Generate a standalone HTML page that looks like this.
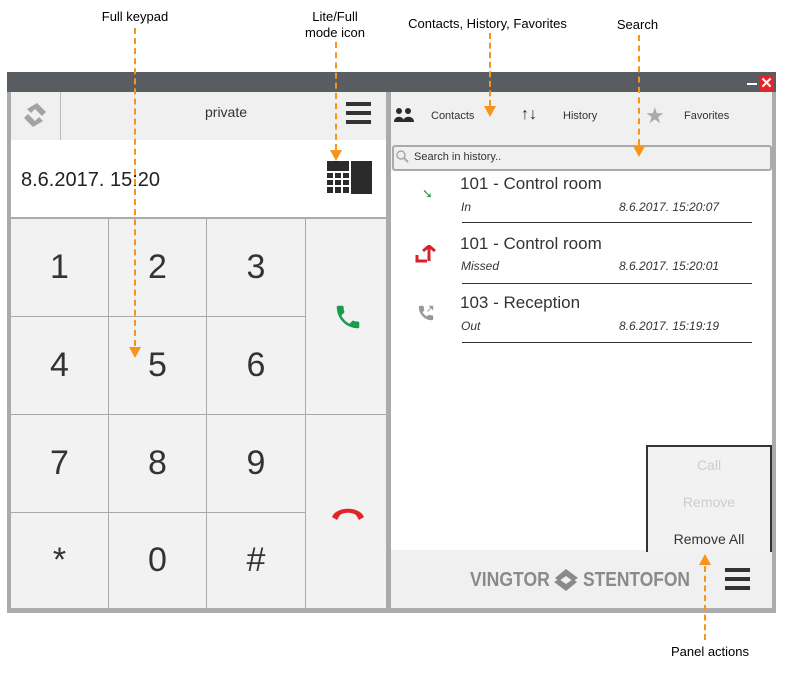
<!DOCTYPE html>
<html><head><meta charset="utf-8"><style>
body{margin:0;width:803px;height:680px;background:#fff;position:relative;font-family:"Liberation Sans",sans-serif;overflow:hidden}
.a{position:absolute}
.lbl{position:absolute;font-size:13px;color:#000;text-align:center}
.dash{position:absolute;width:0;border-left:2px dashed #f7941d}
.arr{position:absolute;width:0;height:0;border-left:6px solid transparent;border-right:6px solid transparent;border-top:11px solid #f7941d}
.arrup{position:absolute;width:0;height:0;border-left:6px solid transparent;border-right:6px solid transparent;border-bottom:11px solid #f7941d}
.k{position:absolute;background:#f2f2f2;border-right:1px solid #a9a9a9;border-bottom:1px solid #a9a9a9;box-sizing:border-box;font-size:34px;color:#333;display:flex;align-items:center;justify-content:center;font-family:"Liberation Sans",sans-serif}
.name{position:absolute;left:460px;font-size:17px;color:#333}
.sub{position:absolute;left:461px;font-size:12px;font-style:italic;color:#333}
.dt{position:absolute;left:619px;font-size:12px;font-style:italic;color:#333}
.hr{position:absolute;left:462px;width:290px;height:1px;background:#333}
.logo{position:absolute;font-size:20px;font-weight:bold;color:#8a8a8a;transform-origin:left top}
</style></head><body>
<div class="a" style="left:7px;top:72px;width:769px;height:541px;background:#a9abad"></div>
<div class="a" style="left:7px;top:72px;width:769px;height:20px;background:#595d61"></div>
<div class="a" style="left:746px;top:77px;width:12px;height:15px;"><div class="a" style="left:1px;top:6px;width:10px;height:2px;background:#fff"></div></div>
<div class="a" style="left:759px;top:76px;width:15px;height:15px;background:#e3242b;color:#fff;font-size:15px;font-weight:bold;line-height:15px;text-align:center">✕</div>
<div class="a" style="left:11px;top:92px;width:375px;height:48px;background:#f0f0f0"></div>
<div class="a" style="left:60px;top:92px;width:1px;height:48px;background:#bbb"></div>
<svg class="a" style="left:21px;top:101px" width="28" height="28" viewBox="0 0 28 28"><path d="M16 2 L25 11 L21 15 L14 8 L10 12 L6 8Z M12 26 L3 17 L7 13 L14 20 L18 16 L22 20Z" fill="#a3a3a3"/></svg>
<div class="a" style="left:205px;top:104px;font-size:14px;color:#333">private</div>
<div class="a" style="left:346px;top:102px;width:25px;height:4px;background:#333;box-shadow:0 9px 0 #333,0 18px 0 #333"></div>
<div class="a" style="left:11px;top:140px;width:375px;height:77px;background:#fff"></div>
<div class="a" style="left:21px;top:169px;font-size:20px;color:#222">8.6.2017. 15:20</div>
<svg class="a" style="left:327px;top:161px" width="46" height="34"><g fill="#2b2b2b"><rect x="0" y="0" width="22" height="10"/><rect x="0" y="12" width="6" height="5"/><rect x="8" y="12" width="6" height="5"/><rect x="16" y="12" width="6" height="5"/><rect x="0" y="19" width="6" height="5"/><rect x="8" y="19" width="6" height="5"/><rect x="16" y="19" width="6" height="5"/><rect x="0" y="26" width="6" height="6"/><rect x="8" y="26" width="6" height="6"/><rect x="16" y="26" width="6" height="6"/><rect x="24" y="0" width="21" height="33"/></g></svg>
<div class="k" style="left:11px;top:219px;width:98px;height:98px">1</div>
<div class="k" style="left:109px;top:219px;width:98px;height:98px">2</div>
<div class="k" style="left:207px;top:219px;width:99px;height:98px">3</div>
<div class="k" style="left:11px;top:317px;width:98px;height:98px">4</div>
<div class="k" style="left:109px;top:317px;width:98px;height:98px">5</div>
<div class="k" style="left:207px;top:317px;width:99px;height:98px">6</div>
<div class="k" style="left:11px;top:415px;width:98px;height:98px">7</div>
<div class="k" style="left:109px;top:415px;width:98px;height:98px">8</div>
<div class="k" style="left:207px;top:415px;width:99px;height:98px">9</div>
<div class="k" style="left:11px;top:513px;width:98px;height:95px;border-bottom:none">*</div>
<div class="k" style="left:109px;top:513px;width:98px;height:95px;border-bottom:none">0</div>
<div class="k" style="left:207px;top:513px;width:99px;height:95px;border-bottom:none">#</div>
<div class="k" style="left:306px;top:219px;width:80px;height:196px;border-right:none"></div>
<div class="k" style="left:306px;top:415px;width:80px;height:193px;border-right:none;border-bottom:none"></div>
<svg class="a" style="left:333px;top:302px" width="30" height="30" viewBox="0 0 24 24"><path d="M6.6 10.8c1.4 2.8 3.8 5.1 6.6 6.6l2.2-2.2c.3-.3.7-.4 1-.2 1.1.4 2.3.6 3.6.6.6 0 1 .4 1 1V20c0 .6-.4 1-1 1C10.6 21 3 13.4 3 4c0-.6.4-1 1-1h3.5c.6 0 1 .4 1 1 0 1.3.2 2.5.6 3.6.1.3 0 .7-.2 1z" fill="#1a9b4b"/></svg>
<svg class="a" style="left:330px;top:503px" width="36" height="20" viewBox="0 0 36 20"><path d="M2 14 C6 3 30 3 34 14 L29 17 L26 12 C22 9 14 9 10 12 L7 17Z" fill="#e3242b"/></svg>
<div class="a" style="left:391px;top:92px;width:381px;height:458px;background:#fff"></div>
<div class="a" style="left:391px;top:92px;width:381px;height:51px;background:#f0f0f0"></div>
<svg class="a" style="left:394px;top:108px" width="20" height="14" viewBox="0 0 20 14"><g fill="#2b2b2b"><circle cx="5" cy="3" r="3"/><circle cx="14" cy="3" r="3"/><path d="M0 14 C0 7 10 7 10 14Z M9 14 C9 7 20 7 20 14Z"/></g></svg>
<div class="a" style="left:431px;top:110px;font-size:11px;color:#333">Contacts</div>
<div class="a" style="left:521px;top:106px;font-size:16px;font-weight:bold;color:#2b2b2b">↑↓</div>
<div class="a" style="left:563px;top:110px;font-size:11px;color:#333">History</div>
<div class="a" style="left:645px;top:103px;font-size:22px;color:#aaa">★</div>
<div class="a" style="left:684px;top:110px;font-size:11px;color:#333">Favorites</div>
<div class="a" style="left:391px;top:143px;width:381px;height:27px;background:#f0f0f0"></div>
<div class="a" style="left:392px;top:145px;width:376px;height:22px;border:2px solid #aaa;border-radius:3px;background:#f0f0f0"></div>
<svg class="a" style="left:396px;top:150px" width="13" height="13"><circle cx="5" cy="5" r="4" fill="none" stroke="#aaa" stroke-width="1.5"/><line x1="8" y1="8" x2="12" y2="12" stroke="#aaa" stroke-width="2"/></svg>
<div class="a" style="left:414px;top:151px;font-size:11px;color:#333">Search in history..</div>
<div style="position:absolute;left:422px;top:186px;color:#2e9a45;font-size:13px">➘</div>
<div class="name" style="top:174px">101 - Control room</div>
<div class="sub" style="top:200px">In</div><div class="dt" style="top:200px">8.6.2017. 15:20:07</div>
<div class="hr" style="top:222px"></div>
<svg class="a" style="left:415px;top:245px" width="22" height="18" viewBox="0 0 22 18"><path d="M2 10 V16 H12 M8 6 L14 1 L20 6 M14 1 V16" fill="none" stroke="#d7222a" stroke-width="3"/></svg>
<div class="name" style="top:234px">101 - Control room</div>
<div class="sub" style="top:259px">Missed</div><div class="dt" style="top:259px">8.6.2017. 15:20:01</div>
<div class="hr" style="top:283px"></div>
<svg class="a" style="left:417px;top:304px" width="18" height="18" viewBox="0 0 24 24"><path d="M6.6 10.8c1.4 2.8 3.8 5.1 6.6 6.6l2.2-2.2c.3-.3.7-.4 1-.2 1.1.4 2.3.6 3.6.6.6 0 1 .4 1 1V20c0 .6-.4 1-1 1C10.6 21 3 13.4 3 4c0-.6.4-1 1-1h3.5c.6 0 1 .4 1 1 0 1.3.2 2.5.6 3.6.1.3 0 .7-.2 1z M14 10 L21 3 M16 3 H21 V8" fill="#999" stroke="#999" stroke-width="1.2"/></svg>
<div class="name" style="top:293px">103 - Reception</div>
<div class="sub" style="top:319px">Out</div><div class="dt" style="top:319px">8.6.2017. 15:19:19</div>
<div class="hr" style="top:342px"></div>
<div class="a" style="left:391px;top:550px;width:381px;height:58px;background:#f0f0f0"></div>
<div class="logo" style="left:470px;top:569px;transform:scaleX(0.88)">VINGTOR</div>
<svg class="a" style="left:551px;top:568px" width="30" height="24" viewBox="0 0 30 24"><path d="M15 1 L27 10 L22 13 L15 8 L8 13 L4 10Z M15 23 L3 14 L8 11 L15 16 L22 11 L26 14Z" fill="#8a8a8a"/></svg>
<div class="logo" style="left:583px;top:569px;transform:scaleX(0.87)">STENTOFON</div>
<div class="a" style="left:725px;top:568px;width:25px;height:4px;background:#333;box-shadow:0 9px 0 #333,0 18px 0 #333"></div>
<div class="a" style="left:646px;top:445px;width:122px;height:105px;border:2px solid #333;border-bottom:none;background:#f2f2f2"></div>
<div class="a" style="left:646px;top:457px;width:126px;text-align:center;font-size:14px;color:#ccc">Call</div>
<div class="a" style="left:646px;top:494px;width:126px;text-align:center;font-size:14px;color:#ccc">Remove</div>
<div class="a" style="left:646px;top:531px;width:126px;text-align:center;font-size:14px;color:#333">Remove All</div>
<div class="lbl" style="left:90px;top:9px;width:90px">Full keypad</div>
<div class="dash" style="left:134px;top:28px;height:318px"></div><div class="arr" style="left:129px;top:347px"></div>
<div class="lbl" style="left:290px;top:9px;width:90px;line-height:16px">Lite/Full<br>mode icon</div>
<div class="dash" style="left:335px;top:42px;height:108px"></div><div class="arr" style="left:330px;top:150px"></div>
<div class="lbl" style="left:395px;top:16px;width:185px">Contacts, History, Favorites</div>
<div class="dash" style="left:489px;top:33px;height:73px"></div><div class="arr" style="left:484px;top:106px"></div>
<div class="lbl" style="left:600px;top:17px;width:75px">Search</div>
<div class="dash" style="left:638px;top:35px;height:110px"></div><div class="arr" style="left:633px;top:146px"></div>
<div class="arrup" style="left:699px;top:554px"></div><div class="dash" style="left:704px;top:566px;height:74px"></div>
<div class="lbl" style="left:660px;top:644px;width:100px">Panel actions</div>
</body></html>
